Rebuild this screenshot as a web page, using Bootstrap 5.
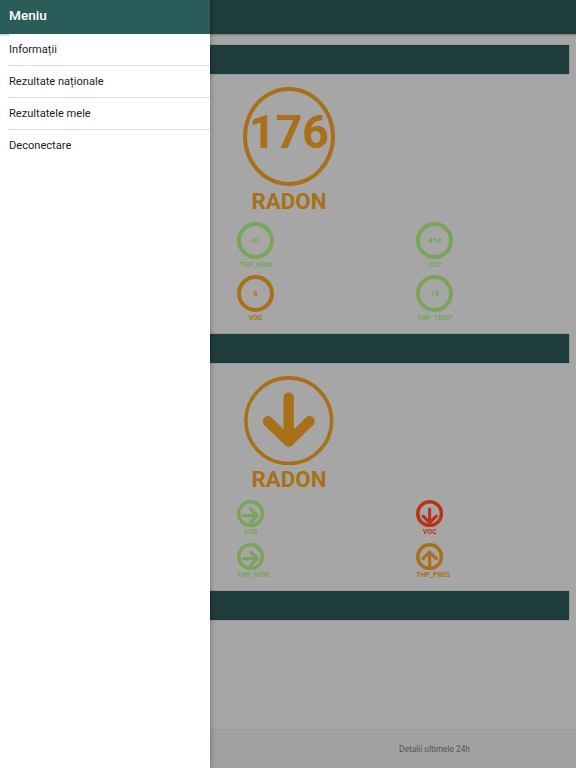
<!DOCTYPE html>
<html lang="ro">
<head>
<meta charset="utf-8">
<meta name="viewport" content="width=device-width, initial-scale=1">
<title>Radon</title>
<link rel="stylesheet" href="https://cdn.jsdelivr.net/npm/bootstrap@5.3.0/dist/css/bootstrap.min.css">
<style>
body{font-family:Roboto,"Liberation Sans",sans-serif;background:#a6a6a6;height:768px;line-height:1}
.app-page{height:768px}
.app-top{height:34px;background:#1d3c3b;box-shadow:0 1px 2px rgba(0,0,0,.3)}
.app-main{padding:11px 7.5px 0 8px}
.strip{height:29px;background:#1d3c3b;box-shadow:0 0 1px rgba(29,60,59,.7)}
.orange{color:#a87018}.green{color:#78a558}.red{color:#b73319}
.hero{width:92px;margin-left:235px}
.ring-big{width:92px;height:98.5px;border:4px solid;border-radius:50%;margin-top:13.2px;font-size:46.5px;padding-bottom:9px}
.hero-name{font-size:22.3px;height:22px;margin-top:4.8px}
.values{padding-left:229px;margin-top:9.6px;height:111.8px}
.values>.col-auto,.trends>.col-auto{width:179.2px}
.cell{width:37.3px;height:53px}
.ring{width:37.3px;height:37.3px;border:4px solid;border-radius:50%;font-size:7px;letter-spacing:.25px;padding-top:2.5px}
.tag{font-size:6.8px;letter-spacing:.1px;margin-top:2.4px;white-space:nowrap}
.arrow-big{width:89.5px;height:89.5px;margin-top:12.8px}
.second .hero-name{margin-top:2.5px}
.trends{padding-left:229px;margin-top:10.2px;height:91.3px}
.trend{height:43px;width:max-content}
.trend svg{width:27.3px;height:27.3px;display:block}
.trend .tag{min-width:27.3px;text-align:center;margin-top:1.9px}
.app-foot{height:39px;background:#a1a1a1;border-top:1px solid #9a9a9a;color:#555;font-size:8.35px}
.foot-tab{padding:1px 0 0 5px}
.drawer{width:210px;height:768px;box-shadow:0 0 6px rgba(0,0,0,.35);z-index:5}
.drawer-top{height:34px;background:#2a5c5a;font-size:13.6px;font-weight:500;padding:0 9px 3px;box-shadow:0 1px 2px rgba(0,0,0,.3)}
.drawer-list .list-group-item{height:32px;margin-left:9px;padding:0;font-size:11.1px;line-height:31px;color:#1c1c1c;border-color:#dedede}
</style>
<script src="https://cdn.jsdelivr.net/npm/bootstrap@5.3.0/dist/js/bootstrap.bundle.min.js"></script>
</head>
<body class="overflow-hidden">
<div class="app-page d-flex flex-column">
  <header class="app-top flex-shrink-0"></header>
  <main class="app-main flex-grow-1">
    <div class="strip"></div>
    <section>
      <div class="hero orange fw-bold d-flex flex-column align-items-center">
        <div class="ring-big d-flex align-items-center justify-content-center">176</div>
        <div class="hero-name">RADON</div>
      </div>
      <div class="values d-flex">
        <div class="col-auto">
          <div class="cell green fw-bold d-flex flex-column align-items-center"><div class="ring d-flex align-items-center justify-content-center">41</div><div class="tag">THP_HUM</div></div>
          <div class="cell orange fw-bold d-flex flex-column align-items-center"><div class="ring d-flex align-items-center justify-content-center">8</div><div class="tag">VOC</div></div>
        </div>
        <div class="col-auto">
          <div class="cell green fw-bold d-flex flex-column align-items-center"><div class="ring d-flex align-items-center justify-content-center">414</div><div class="tag">CO2</div></div>
          <div class="cell green fw-bold d-flex flex-column align-items-center"><div class="ring d-flex align-items-center justify-content-center">18</div><div class="tag">THP_TEMP</div></div>
        </div>
      </div>
    </section>
    <div class="strip"></div>
    <section class="second">
      <div class="hero orange fw-bold d-flex flex-column align-items-center">
        <svg class="arrow-big" viewBox="0 0 90 90" fill="none" stroke="currentColor"><circle cx="45" cy="45" r="43.1" stroke-width="3.6"/><path d="M45 21.500V66M24 45.500L45 66L66 45.500" stroke-width="10.400" stroke-linecap="round" stroke-linejoin="round"/></svg>
        <div class="hero-name">RADON</div>
      </div>
      <div class="trends d-flex">
        <div class="col-auto">
          <div class="trend green fw-bold"><svg viewBox="0 0 27 27" fill="none" stroke="currentColor"><circle cx="13.500" cy="13.500" r="11.700" stroke-width="3.500"/><path d="M6.500 15.500H20M13.500 9L20 15.500L13.500 22" stroke-width="3.100" stroke-linecap="round" stroke-linejoin="round"/></svg><div class="tag">COB</div></div>
          <div class="trend green fw-bold"><svg viewBox="0 0 27 27" fill="none" stroke="currentColor"><circle cx="13.500" cy="13.500" r="11.700" stroke-width="3.500"/><path d="M6.500 15.500H20M13.500 9L20 15.500L13.500 22" stroke-width="3.100" stroke-linecap="round" stroke-linejoin="round"/></svg><div class="tag">THP_HUM</div></div>
        </div>
        <div class="col-auto">
          <div class="trend red fw-bold"><svg viewBox="0 0 27 27" fill="none" stroke="currentColor"><circle cx="13.500" cy="13.500" r="11.700" stroke-width="3.500"/><path d="M13.500 9V22.500M7 16L13.500 22.500L20 16" stroke-width="3.100" stroke-linecap="round" stroke-linejoin="round"/></svg><div class="tag">VOC</div></div>
          <div class="trend orange fw-bold"><svg viewBox="0 0 27 27" fill="none" stroke="currentColor"><circle cx="13.500" cy="13.500" r="11.700" stroke-width="3.500"/><path d="M13.500 22.500V9M7 15.500L13.500 9L20 15.500" stroke-width="3.100" stroke-linecap="round" stroke-linejoin="round"/></svg><div class="tag">THP_PRES</div></div>
        </div>
      </div>
    </section>
    <div class="strip"></div>
  </main>
  <footer class="app-foot flex-shrink-0 d-flex align-items-center">
    <div class="w-50"></div>
    <div class="foot-tab w-50 text-center">Detalii ultimele 24h</div>
  </footer>
</div>
<nav class="drawer bg-white position-absolute top-0 start-0">
  <div class="drawer-top text-white d-flex align-items-center">Meniu</div>
  <div class="drawer-list list-group list-group-flush rounded-0">
    <a class="list-group-item">Informații</a>
    <a class="list-group-item">Rezultate naționale</a>
    <a class="list-group-item">Rezultatele mele</a>
    <a class="list-group-item">Deconectare</a>
  </div>
</nav>
</body>
</html>
